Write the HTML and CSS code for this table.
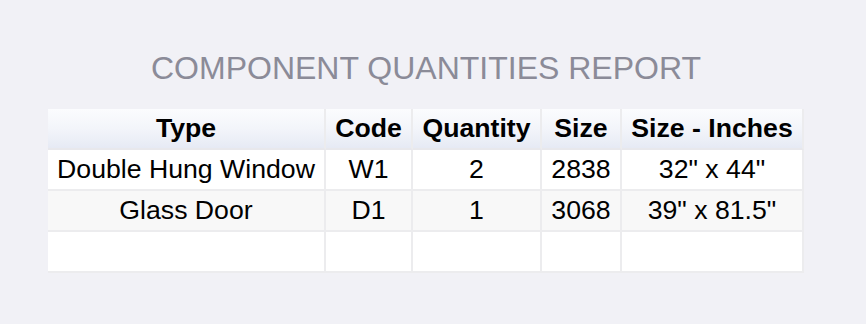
FILE: index.html
```html
<!DOCTYPE html>
<html>
<head>
<meta charset="utf-8">
<link rel="stylesheet" href="styles.css">
</head>
<body>
<div class="report">
  <h1 class="report-title">COMPONENT QUANTITIES REPORT</h1>
  <table class="report-table">
    <thead>
      <tr>
        <th class="col-type">Type</th>
        <th class="col-code">Code</th>
        <th class="col-qty">Quantity</th>
        <th class="col-size">Size</th>
        <th class="col-inches">Size - Inches</th>
      </tr>
    </thead>
    <tbody>
      <tr>
        <td>Double Hung Window</td>
        <td>W1</td>
        <td>2</td>
        <td>2838</td>
        <td>32" x 44"</td>
      </tr>
      <tr class="striped">
        <td>Glass Door</td>
        <td>D1</td>
        <td>1</td>
        <td>3068</td>
        <td>39" x 81.5"</td>
      </tr>
      <tr>
        <td>&nbsp;</td>
        <td>&nbsp;</td>
        <td>&nbsp;</td>
        <td>&nbsp;</td>
        <td>&nbsp;</td>
      </tr>
    </tbody>
  </table>
</div>
</body>
</html>
```
FILE: styles.css
```css
html, body {
  background: #f1f1f6;
}
body {
  margin: 0;
  font-family: "Liberation Sans", Arial, sans-serif;
}
.report {
  width: 756px;
  margin: 50px 0 0 48px;
}
.report-title {
  margin: 0 0 22px;
  font-size: 32px;
  font-weight: normal;
  line-height: normal;
  color: #8b8b98;
  text-align: center;
}
.report-table {
  width: 756px;
  table-layout: fixed;
  border-collapse: separate;
  border-spacing: 0;
  font-size: 26.67px;
  color: #000;
}
.report-table th,
.report-table td {
  box-sizing: border-box;
  padding: 4px 9px;
  text-align: center;
  white-space: nowrap;
  line-height: normal;
  border-right: 2px solid #ececee;
  border-bottom: 2px solid #ececee;
}
.report-table th {
  font-weight: bold;
  background: linear-gradient(to bottom, #fbfcfe 0%, #f3f5fa 50%, #e6eaf4 100%);
  border-bottom-color: #e8e8ec;
}
.report-table td {
  background: #ffffff;
}
.report-table tr.striped td {
  background: #f8f8f8;
}
.col-type { width: 278px; }
.col-code { width: 87px; }
.col-qty { width: 129px; }
.col-size { width: 80px; }
.col-inches { width: 182px; }
```
